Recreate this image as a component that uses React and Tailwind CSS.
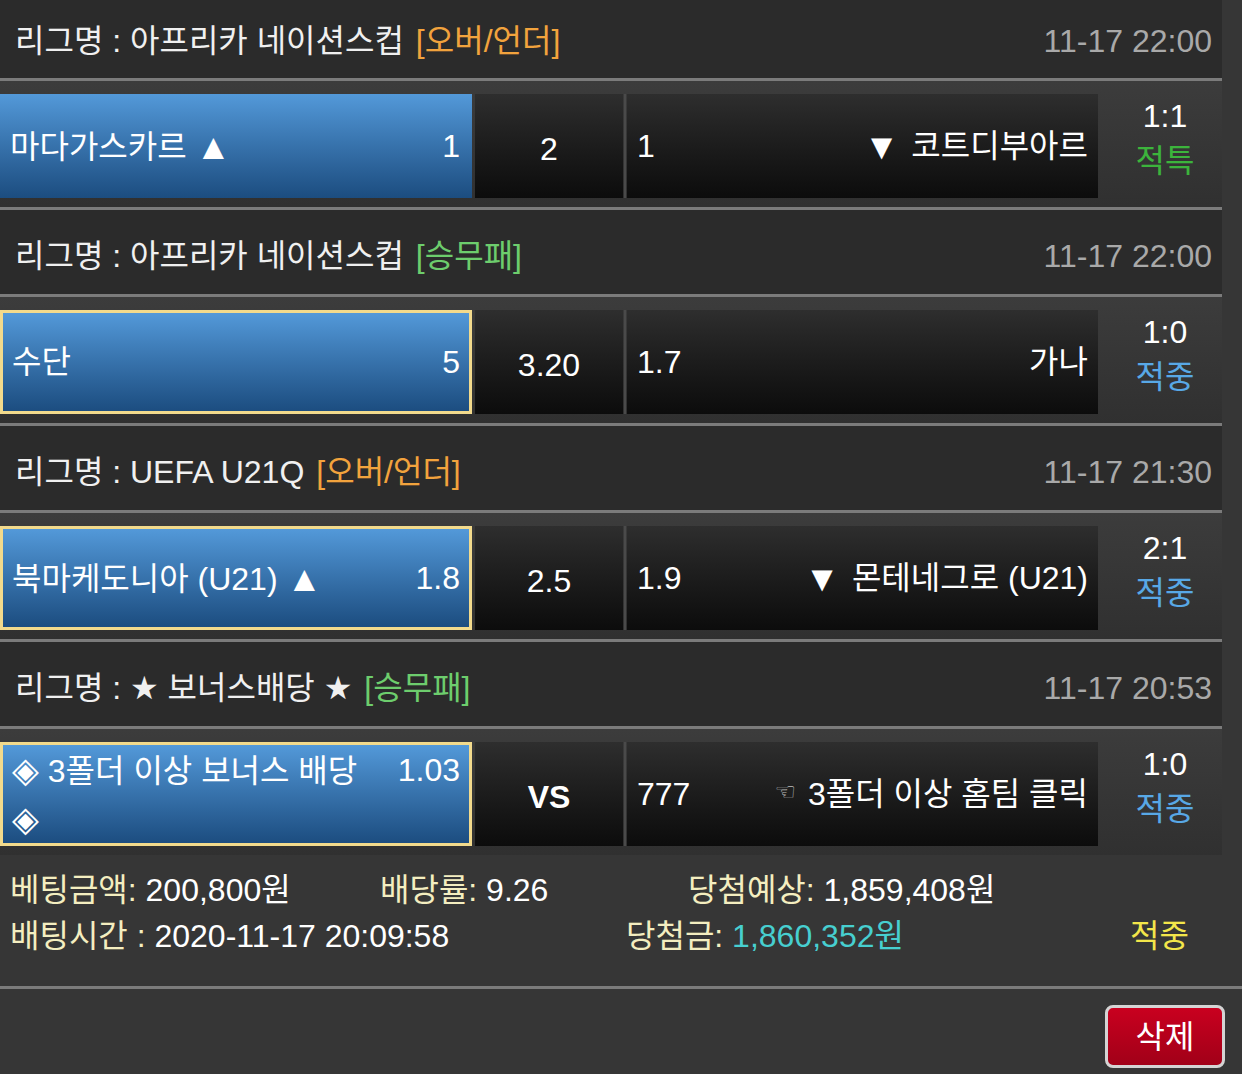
import React from "react";

const FONT = "font-['Liberation_Sans','DejaVu_Sans','Noto_Sans_CJK_KR',sans-serif]";

const Up = () => <span className="text-[36px] relative top-[1px]">▲</span>;
const Down = () => <span className="text-[36px] relative top-[1px] mr-[12px]">▼</span>;
const Dia = () => <span className="text-[35px]">◈</span>;

const blocks = [
  {
    league: "아프리카 네이션스컵",
    tag: "[오버/언더]",
    tagColor: "text-[#f2a33d]",
    time: "11-17 22:00",
    first: true,
    home: <>마다가스카르 <Up /></>,
    homeOdd: "1",
    selected: false,
    draw: "2",
    awayOdd: "1",
    away: <><Down />코트디부아르</>,
    score: "1:1",
    result: "적특",
    resultColor: "text-[#3cb43c]",
  },
  {
    league: "아프리카 네이션스컵",
    tag: "[승무패]",
    tagColor: "text-[#6dcd6d]",
    time: "11-17 22:00",
    home: <>수단</>,
    homeOdd: "5",
    selected: true,
    draw: "3.20",
    awayOdd: "1.7",
    away: <>가나</>,
    score: "1:0",
    result: "적중",
    resultColor: "text-[#58a8e6]",
  },
  {
    league: "UEFA U21Q",
    tag: "[오버/언더]",
    tagColor: "text-[#f2a33d]",
    time: "11-17 21:30",
    home: <>북마케도니아 (U21) <Up /></>,
    homeOdd: "1.8",
    selected: true,
    draw: "2.5",
    awayOdd: "1.9",
    away: <><Down />몬테네그로 (U21)</>,
    score: "2:1",
    result: "적중",
    resultColor: "text-[#58a8e6]",
  },
  {
    league: "★ 보너스배당 ★",
    tag: "[승무패]",
    tagColor: "text-[#6dcd6d]",
    time: "11-17 20:53",
    home: <><Dia /> 3폴더 이상 보너스 배당 <Dia /></>,
    homeOdd: "1.03",
    homeTop: true,
    selected: true,
    draw: "VS",
    drawBold: true,
    awayOdd: "777",
    away: (
      <>
        <span className="text-[24px] text-[#bdbdbd] mr-[12px] relative top-[-2px]">☜</span>3폴더 이상 홈팀 클릭
      </>
    ),
    score: "1:0",
    result: "적중",
    resultColor: "text-[#58a8e6]",
    last: true,
  },
];

function Block({ b }) {
  return (
    <>
      <div
        className={`${b.first ? "h-[78px] pt-[4px]" : "h-[84px] pt-[8px]"} bg-[#2b2b2b] flex items-center justify-between pl-[15px] pr-[10px]`}
      >
        <div className="text-[#f0f0f0] flex items-center whitespace-nowrap">
          <span>리그명 : {b.league}</span>
          <span className={`${b.tagColor} ml-[12px]`}>{b.tag}</span>
        </div>
        <div className="text-[#a9a9a9]">{b.time}</div>
      </div>
      <div className="h-[3px] bg-[#7b7b7b]" />
      <div className="h-[126px] bg-gradient-to-b from-[#3c3c3c] to-[#303030] pt-[13px] flex">
        <div
          className={`w-[472px] h-[104px] bg-gradient-to-b from-[#5399d9] to-[#1c4d80] flex justify-between text-white ${
            b.selected ? "border-[3px] border-[#f2da8c] pl-[9px] pr-[9px]" : "pl-[10px] pr-[12px]"
          } ${b.homeTop ? "items-start pt-[1px]" : "items-center"}`}
        >
          <div className={`${b.homeTop ? "w-[360px] leading-[48px]" : "whitespace-nowrap"}`}>{b.home}</div>
          <div className={`${b.homeTop ? "leading-[48px]" : ""}`}>{b.homeOdd}</div>
        </div>
        <div className="w-[3px]" />
        <div
          className={`w-[148px] h-[104px] bg-gradient-to-b from-[#2e2e2e] to-[#0c0c0c] flex items-center justify-center pt-[5px] text-white ${
            b.drawBold ? "font-bold" : ""
          }`}
        >
          {b.draw}
        </div>
        <div className="w-[1px]" />
        <div className="w-[2px] h-[104px] bg-[#4a4a4a]" />
        <div className="w-[1px]" />
        <div className="w-[471px] h-[104px] bg-gradient-to-b from-[#2e2e2e] to-[#0c0c0c] flex items-center justify-between pl-[10px] pr-[10px] text-white whitespace-nowrap">
          <div>{b.awayOdd}</div>
          <div className="flex items-center">{b.away}</div>
        </div>
        <div className="flex-1 h-[104px] flex flex-col items-center pl-[10px] leading-[45px]">
          <div className="text-white">{b.score}</div>
          <div className={b.resultColor}>{b.result}</div>
        </div>
      </div>
      {!b.last && <div className="h-[3px] bg-[#7b7b7b]" />}
    </>
  );
}

export default function App() {
  return (
    <div className={`w-[1242px] h-[1074px] overflow-hidden bg-[#363636] ${FONT} text-[32px] leading-none`}>
      <div className="w-[1222px]">
        {blocks.map((b, i) => (
          <Block key={i} b={b} />
        ))}
      </div>
      <div className="pt-[12px] pb-[27px] pl-[10px] whitespace-nowrap">
        <div className="h-[46px] flex items-center">
          <div className="w-[370px]">
            <span className="text-[#f4eec0]">베팅금액:</span>
            <span className="text-white"> 200,800원</span>
          </div>
          <div className="w-[308px]">
            <span className="text-[#f4eec0]">배당률:</span>
            <span className="text-white"> 9.26</span>
          </div>
          <div>
            <span className="text-[#f4eec0]">당첨예상:</span>
            <span className="text-white"> 1,859,408원</span>
          </div>
        </div>
        <div className="h-[46px] flex items-center">
          <div className="w-[616px]">
            <span className="text-[#f4eec0]">배팅시간 :</span>
            <span className="text-white"> 2020-11-17 20:09:58</span>
          </div>
          <div className="w-[504px]">
            <span className="text-[#f4eec0]">당첨금:</span>
            <span className="text-[#47cfd0]"> 1,860,352원</span>
          </div>
          <div className="text-[#f3e64a]">적중</div>
        </div>
      </div>
      <div className="h-[3px] bg-[#7b7b7b]" />
      <div className="flex justify-end pt-[16px] pr-[17px]">
        <button className="w-[120px] h-[63px] rounded-[8px] border-[3px] border-[#d4d4d4] bg-gradient-to-b from-[#c9001f] to-[#a10018] text-white flex items-center justify-center">
          삭제
        </button>
      </div>
    </div>
  );
}
